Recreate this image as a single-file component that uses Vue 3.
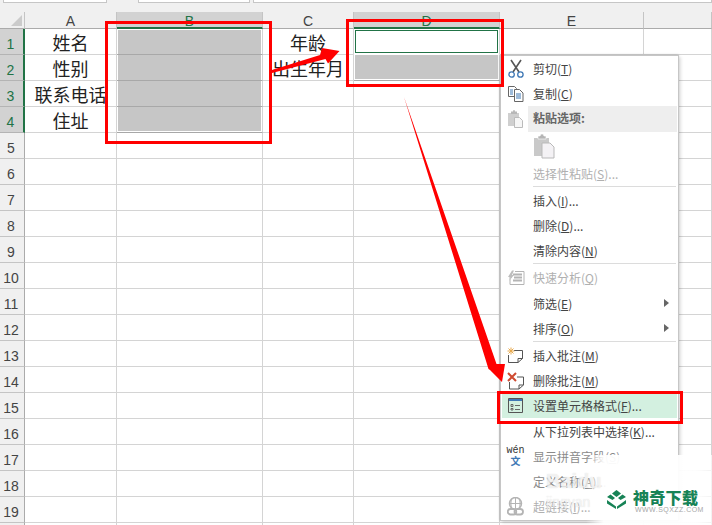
<script setup>
const cols = ['A', 'B', 'C', 'D', 'E', '']
const selCols = ['B', 'D']
const rows = Array.from({ length: 20 }, (_, i) => i + 1)
const values = {
  A1: '姓名', A2: '性别', A3: '联系电话', A4: '住址',
  C1: '年龄', C2: '出生年月'
}
function cellClass(c, r) {
  return {
    sel: (c === 'B' && r <= 4) || (c === 'D' && r === 2),
    active: c === 'D' && r === 1,
    top: c === 'B' && r === 1,
    end: c === 'B' && r === 4,
    dbot: c === 'D' && r === 2
  }
}
const menu = [
  { t: '剪切', k: 'T', icon: 'cut' },
  { t: '复制', k: 'C', icon: 'copy' },
  { t: '粘贴选项:', head: true, icon: 'paste' },
  { pasteRow: true },
  { t: '选择性粘贴', k: 'S', s: '...', off: true },
  { sep: true },
  { t: '插入', k: 'I', s: '...' },
  { t: '删除', k: 'D', s: '...' },
  { t: '清除内容', k: 'N' },
  { sep: true },
  { t: '快速分析', k: 'Q', off: true, icon: 'quick' },
  { t: '筛选', k: 'E', sub: true },
  { t: '排序', k: 'O', sub: true },
  { sep: true },
  { t: '插入批注', k: 'M', icon: 'noteadd' },
  { t: '删除批注', k: 'M', icon: 'notedel' },
  { t: '设置单元格格式', k: 'F', s: '...', icon: 'format', hot: true },
  { t: '从下拉列表中选择', k: 'K', s: '...' },
  { t: '显示拼音字段', k: 'S', icon: 'wen', off2: true },
  { t: '定义名称', k: 'A', s: '...', off2: true },
  { t: '超链接', k: 'I', s: '...', off: true, icon: 'link' }
]
</script>

<template>
  <div class="page">
    <div class="formula">
      <div class="fbox name"></div>
      <div class="fbox mid"></div>
      <div class="fbox rest"></div>
    </div>

    <div class="sheet">
      <div class="corner"><span class="tri"></span></div>
      <div v-for="c in cols" :key="c" class="chead" :class="{ on: selCols.includes(c) }">{{ c }}</div>
      <template v-for="r in rows" :key="r">
        <div class="rhead" :class="{ on: r <= 4 }">{{ r < 20 ? r : '' }}</div>
        <div v-for="c in cols" :key="c + r" class="cell" :class="cellClass(c, r)">{{ values[c + r] }}</div>
      </template>
    </div>

    <div class="menu">
      <template v-for="(m, i) in menu" :key="i">
        <div v-if="m.sep" class="sep"></div>
        <div v-else-if="m.pasteRow" class="paste-row">
          <svg width="22" height="26" viewBox="0 0 22 26">
            <path d="M1 5h15v18H1z" fill="#c9c9c9" />
            <path d="M5 5V3h2l1-2h2l1 2h2v3H5z" fill="#b5b5b5" stroke="#fff" stroke-width=".6" />
            <path d="M9 10h8l4 4v11H9z" fill="#f4f2f5" stroke="#b9b9b9" />
          </svg>
        </div>
        <div v-else class="item" :class="{ off: m.off, off2: m.off2, hot: m.hot }">
          <span class="ico">
            <svg v-if="m.icon === 'cut'" width="16" height="20" viewBox="0 0 16 20" fill="none">
              <path d="M3 1l8 12M13 1L5 13" stroke="#555" stroke-width="1.6" />
              <circle cx="3.6" cy="15.5" r="2.7" stroke="#3f78b5" stroke-width="1.3" />
              <circle cx="12.4" cy="15.5" r="2.7" stroke="#3f78b5" stroke-width="1.3" />
            </svg>
            <svg v-else-if="m.icon === 'copy'" width="16" height="16" viewBox="0 0 16 16" fill="none">
              <path d="M7 10.5H.5V.5h6l2 2v1" stroke="#666" />
              <path d="M2 4h3M2 6h3M2 8h3" stroke="#3f78b5" />
              <path d="M6.500 3.500h5l3.500 3.500v8.500H6.500z" fill="#fff" stroke="#666" />
              <path d="M8 8h5M8 10h5M8 12h5" stroke="#3f78b5" />
            </svg>
            <svg v-else-if="m.icon === 'paste'" width="16" height="18" viewBox="0 0 16 18">
              <path d="M0 3h11v13H0z" fill="#cfcfcf" />
              <path d="M3 3V1.500h2l.5-1.500h1l.5 1.500h2V4H3z" fill="#b8b8b8" />
              <path d="M6.500 7.500h5l3 3v7h-8z" fill="#f6f6f6" stroke="#bbb" />
            </svg>
            <svg v-else-if="m.icon === 'quick'" width="18" height="16" viewBox="0 0 18 16" fill="none">
              <path d="M3 14.500V7h2M8 1.500h9v13H3" stroke="#b4b4b4" />
              <path d="M6 4.500h9M7 7.500h8M6 10.500h9" stroke="#b4b4b4" stroke-width="2" />
              <path d="M5 .5L1 7h3l-2 4 5-6H5l2-4.500z" fill="#bdbdbd" />
            </svg>
            <svg v-else-if="m.icon === 'noteadd'" width="17" height="17" viewBox="0 0 17 17" fill="none">
              <path d="M1.500 8v7.500H11l4.500-4V3.500H7" stroke="#555" />
              <path d="M11 15.500v-4h4.500" stroke="#555" />
              <path d="M4 .5v7M.5 4h7M1.500 1.500l5 5M6.500 1.500l-5 5" stroke="#e8a94d" />
            </svg>
            <svg v-else-if="m.icon === 'notedel'" width="18" height="18" viewBox="0 0 18 18" fill="none">
              <path d="M2.500 10v7H12l4.500-4V5H10" stroke="#555" />
              <path d="M12 17v-4h4.500" stroke="#555" />
              <path d="M1 1l8 8M9 1L1 9" stroke="#cf4a30" stroke-width="2" />
            </svg>
            <svg v-else-if="m.icon === 'format'" width="15" height="15" viewBox="0 0 15 15" fill="none">
              <path d="M.5.500h14v14H.5z" stroke="#555" />
              <path d="M1 2h13" stroke="#3f78b5" stroke-width="2" />
              <path d="M3 6.500h2v2H3zM3 10.500h2v1.500H3z" stroke="#666" />
              <path d="M7 7.500h5M7 11.500h5" stroke="#666" />
            </svg>
            <span v-else-if="m.icon === 'wen'" class="wen"><b>wén</b><i>文</i></span>
            <svg v-else-if="m.icon === 'link'" width="17" height="20" viewBox="0 0 17 20" fill="none" stroke="#b4b4b4">
              <circle cx="8.500" cy="6.500" r="6" stroke-width="1.500" />
              <path d="M2.500 6.500h12M8.500.5v12M5 1.500c-1.500 3-1.500 7 0 10M12 1.500c1.500 3 1.500 7 0 10" />
              <rect x=".8" y="12" width="8.500" height="5.500" rx="2.700" fill="#fff" stroke-width="1.800" />
              <rect x="7.500" y="12" width="8.500" height="5.500" rx="2.700" stroke-width="1.800" />
            </svg>
          </span>
          <span class="label" :class="{ head: m.head }">
            {{ m.t }}<template v-if="m.k">(<u>{{ m.k }}</u>){{ m.s }}</template>
          </span>
          <span v-if="m.sub" class="caret"></span>
        </div>
      </template>
    </div>

    <div class="shade"></div>
    <div class="baidu"><b>Baidu</b><span>jingyan</span></div>
    <div class="brand">
      <svg width="21" height="21" viewBox="0 0 21 21">
        <path d="M10.500 1L15 4.500 10.500 8 6 4.500z" fill="#178356" />
        <path d="M4.500 5.500L9 9l-2.500 2L1 8zM16.500 5.500L12 9l2.500 2L20 8z" fill="#178356" />
        <path d="M1 11l9 6.500V20l-9-5.500zM20 11l-9 6.500V20l9-5.500z" fill="#178356" />
      </svg>
      <div class="brand-text">
        <b>神奇下载</b>
        <span>WWW.SQXZZ.COM</span>
      </div>
    </div>

    <div class="mark m1"></div>
    <div class="mark m2"></div>
    <div class="mark m3"></div>
    <svg class="arrows" width="712" height="525" viewBox="0 0 712 525">
      <path d="M272 70L320 55 322 48 339.500 51 328 63.500 325.500 59 272 73z" fill="#f00" />
      <path d="M404 97L496.500 364 505 364 502 382 490 370 488.500 369z" fill="#f00" />
    </svg>
  </div>
</template>

<style>
html, body { margin: 0; background: #fff; }
</style>

<style scoped>
.page {
  position: relative;
  width: 712px;
  height: 525px;
  overflow: hidden;
  background: #fff;
  font-family: "Noto Sans CJK SC", "Liberation Sans", sans-serif;
}
.formula {
  display: flex;
  gap: 3px;
  height: 12px;
  background: #f0f0f0;
  padding-left: 3px;
  box-sizing: border-box;
}
.fbox {
  height: 2px;
  background: #fff;
  border: 1px solid #c6c6c6;
  border-top: 0;
}
.fbox.name { width: 102px; margin-right: 28px; }
.fbox.mid { width: 110px; }
.fbox.rest { flex: 1; }
.sheet {
  display: grid;
  grid-template-columns: 25px 92px 146px 91px 146px 144px 68px;
  grid-template-rows: 17px repeat(20, 26px);
}
.corner {
  position: relative;
  background: #f0f0f0;
  border-right: 1px solid #c4c4c4;
  border-bottom: 1px solid #ababab;
  box-sizing: border-box;
}
.tri {
  position: absolute;
  right: 2px;
  bottom: 2px;
  width: 0;
  height: 0;
  border-left: 11px solid transparent;
  border-bottom: 11px solid #cbcbcb;
}
.chead {
  background: #f0f0f0;
  border-right: 1px solid #c4c4c4;
  border-bottom: 1px solid #ababab;
  box-sizing: border-box;
  text-align: center;
  font: 14px/18px "Liberation Sans", sans-serif;
  color: #444;
  overflow: hidden;
}
.chead.on {
  background: #d2d2d2;
  color: #217346;
  border-bottom: 2px solid #217346;
}
.rhead {
  background: #f0f0f0;
  border-right: 1px solid #ababab;
  border-bottom: 1px solid #c4c4c4;
  box-sizing: border-box;
  text-align: center;
  padding-right: 2px;
  font: 14px/31px "Liberation Sans", sans-serif;
  color: #444;
  overflow: hidden;
}
.rhead.on {
  background: #d2d2d2;
  color: #217346;
  border-right: 2px solid #217346;
  border-bottom-color: #b4b4b4;
}
.cell {
  border-right: 1px solid #d4d4d4;
  border-bottom: 1px solid #d4d4d4;
  box-sizing: border-box;
  text-align: center;
  font-size: 18px;
  line-height: 27px;
  color: #222;
  white-space: nowrap;
}
.cell.sel {
  background: #c6c6c6;
  border-bottom-color: #a8a8a8;
  box-shadow: inset 1px 0 0 #fff, inset -1px 0 0 #fff;
}
.cell.top { box-shadow: inset 1px 0 0 #fff, inset -1px 0 0 #fff, inset 0 1px 0 #fff; }
.cell.end { box-shadow: inset 1px 0 0 #fff, inset -1px 0 0 #fff, inset 0 -1px 0 #fff; }
.cell.active {
  box-shadow: inset 0 0 0 1px #fff, inset 0 0 0 2px #217346;
  border-bottom-color: #fff;
}
.cell.dbot { box-shadow: inset 1px 0 0 #fff, inset -1px 0 0 #fff, inset 0 -1px 0 #fff; }
.menu {
  position: absolute;
  left: 500px;
  top: 55px;
  width: 179px;
  height: 466px;
  box-sizing: border-box;
  padding: 0 1px;
  background: #fff;
  border: 1px solid #c6c6c6;
  box-shadow: 2px 2px 3px rgba(0, 0, 0, .12), -1px 0 2px rgba(0, 0, 0, .1), 0 -1px 2px rgba(0, 0, 0, .08);
  font-size: 12px;
  color: #444;
}
.item {
  display: flex;
  align-items: center;
  height: 25.2px;
  position: relative;
}
.ico {
  flex: none;
  width: 27px;
  margin-right: 4px;
  display: flex;
  justify-content: center;
  align-items: center;
}
.label { white-space: nowrap; }
.label.head {
  align-self: stretch;
  display: flex;
  align-items: center;
  flex: 1;
  background: #eeeeee;
  margin-left: -5px;
  padding-left: 5px;
  padding-bottom: 2px;
  font-weight: 700;
  color: #666;
}
.item.off { color: #b0b0b0; }
.item.off2 { color: #8a8a8a; }
.item.hot { background: #d3f0e0; }
.caret {
  position: absolute;
  right: 8px;
  top: 8px;
  border-left: 5px solid #666;
  border-top: 4px solid transparent;
  border-bottom: 4px solid transparent;
}
.sep {
  height: 1px;
  margin: 0 1px 1px 31px;
  background: #dcdcdc;
}
.paste-row {
  height: 29px;
  padding-left: 31px;
  display: flex;
  align-items: center;
}
.wen { display: flex; flex-direction: column; align-items: center; line-height: 10px; }
.wen b { font: 400 10px/10px "Liberation Mono", monospace; color: #333; }
.wen i { font-style: normal; font-size: 10px; line-height: 10px; color: #3f78b5; font-weight: 700; }
.shade {
  position: absolute;
  right: 0;
  bottom: 0;
  width: 126px;
  height: 70px;
  background: linear-gradient(90deg, rgba(255, 255, 255, 0), rgba(255, 255, 255, .95) 14%, rgba(255, 255, 255, .95) 88%, rgba(255, 255, 255, .7));
}
.baidu {
  position: absolute;
  left: 546px;
  top: 468px;
  display: flex;
  flex-direction: column;
  color: rgba(255, 255, 255, .65);
  text-shadow: 0 0 1px rgba(170, 170, 170, .45);
  font: 700 20px/26px "Liberation Sans", sans-serif;
}
.baidu span { font-size: 14px; line-height: 16px; font-weight: 400; }
.brand {
  position: absolute;
  left: 606px;
  top: 489px;
  display: flex;
  gap: 6px;
}
.brand-text { display: flex; flex-direction: column; }
.brand-text b {
  font-size: 16px;
  line-height: 17px;
  letter-spacing: .3px;
  color: #178356;
  font-weight: 900;
}
.brand-text span {
  font: 7px/8px "Liberation Sans", sans-serif;
  letter-spacing: .45px;
  color: #a8a8a8;
  padding-left: 2px;
}
.mark {
  position: absolute;
  box-sizing: border-box;
  border: 3px solid #f00;
}
.m1 { left: 105px; top: 21px; width: 167px; height: 123px; }
.m2 { left: 346px; top: 19px; width: 158px; height: 68px; }
.m3 { left: 497px; top: 391px; width: 186px; height: 33px; }
.arrows { position: absolute; left: 0; top: 0; pointer-events: none; }
</style>
